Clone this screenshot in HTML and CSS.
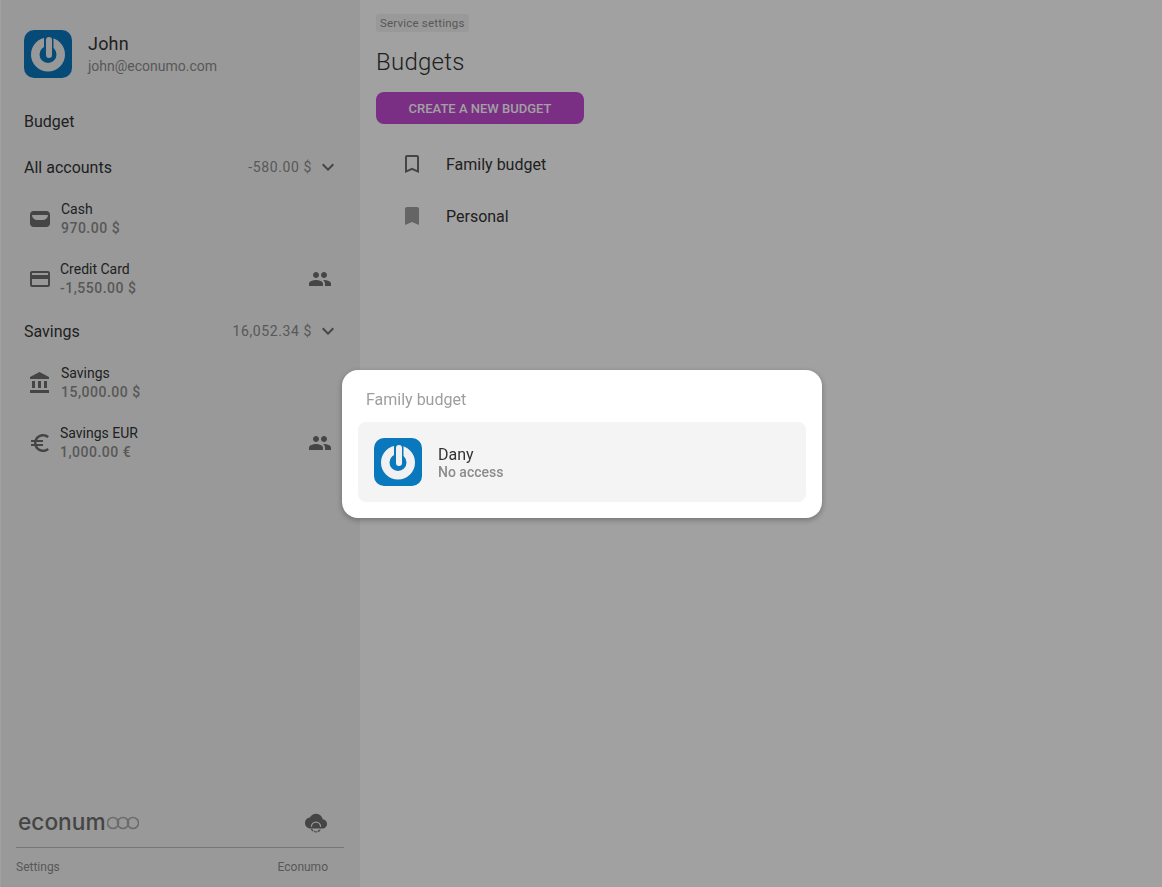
FILE: index.html
```html
<!DOCTYPE html>
<html lang="en">
<head>
  <meta charset="UTF-8" />
  <title>Budgets</title>
  <link rel="stylesheet" href="styles.css">
</head>
<body>
  <div class="layout">
    <aside class="sidebar">
      <div class="user">
        <svg class="avatar" viewBox="0 0 48 48">
          <rect width="48" height="48" rx="10" fill="#0a78bd" />
          <g class="avatar-mark">
            <circle cx="24" cy="24.500" r="12.750" fill="none" stroke="#f1f1f1" stroke-width="8.500" />
            <path d="M24.750 5v16" stroke="#0a78bd" stroke-width="9.500" />
            <path d="M25 10v15" stroke="#f1f1f1" stroke-width="6" stroke-linecap="round" />
          </g>
        </svg>
        <div class="user-text">
          <div class="user-name">John</div>
          <div class="user-mail">john@econumo.com</div>
        </div>
      </div>

      <div class="nav-link">Budget</div>

      <div class="group">
        <span>All accounts</span>
        <span class="group-sum">-580.00 $</span>
        <svg class="chevron" viewBox="0 0 24 24"><path d="M16.59 8.59L12 13.17 7.41 8.59 6 10l6 6 6-6z" /></svg>
      </div>
      <div class="account">
        <svg class="account-icon" viewBox="0 0 24 24"><path fill-rule="evenodd" d="M5.500 4h13c1.900 0 3.500 1.600 3.500 3.500v9c0 1.900-1.600 3.500-3.500 3.500h-13C3.600 20 2 18.400 2 16.500v-9C2 5.600 3.600 4 5.500 4zm-1 4c-.4 0-.6.300-.5.700.6 2.600 2.600 4.300 5 4.300h6c2.400 0 4.400-1.700 5-4.300.1-.4-.1-.7-.5-.7z" /></svg>
        <div class="account-text wide">
          <div class="account-name">Cash</div>
          <div class="account-sum">970.00 $</div>
        </div>
      </div>
      <div class="account">
        <svg class="account-icon" viewBox="0 0 24 24"><path d="M20 4H4c-1.110 0-1.990.89-1.990 2L2 18c0 1.110.89 2 2 2h16c1.110 0 2-.89 2-2V6c0-1.110-.89-2-2-2zm0 14H4v-6h16v6zm0-10H4V6h16v2z" /></svg>
        <div class="account-text">
          <div class="account-name">Credit Card</div>
          <div class="account-sum">-1,550.00 $</div>
        </div>
        <svg class="shared" viewBox="0 0 24 24"><path d="M16 11c1.660 0 2.990-1.340 2.990-3S17.660 5 16 5c-1.660 0-3 1.340-3 3s1.340 3 3 3zm-8 0c1.660 0 2.990-1.340 2.990-3S9.660 5 8 5C6.340 5 5 6.340 5 8s1.340 3 3 3zm0 2c-2.330 0-7 1.170-7 3.500V19h14v-2.500c0-2.330-4.670-3.500-7-3.500zm8 0c-.29 0-.62.02-.97.05 1.160.84 1.970 1.970 1.970 3.450V19h6v-2.500c0-2.330-4.670-3.500-7-3.500z" /></svg>
      </div>

      <div class="group">
        <span>Savings</span>
        <span class="group-sum">16,052.34 $</span>
        <svg class="chevron" viewBox="0 0 24 24"><path d="M16.59 8.59L12 13.17 7.41 8.59 6 10l6 6 6-6z" /></svg>
      </div>
      <div class="account">
        <svg class="account-icon" viewBox="0 0 24 24"><path d="M4 10v7h3v-7H4zm6 0v7h3v-7h-3zM2 22h19v-3H2v3zm14-12v7h3v-7h-3zm-4.500-9L2 6v2h19V6l-9.500-5z" /></svg>
        <div class="account-text wide">
          <div class="account-name">Savings</div>
          <div class="account-sum">15,000.00 $</div>
        </div>
      </div>
      <div class="account">
        <svg class="account-icon" viewBox="0 0 24 24"><path d="M15 18.500c-2.510 0-4.680-1.420-5.760-3.500H15v-2H8.580c-.05-.33-.08-.66-.08-1s.03-.67.08-1H15V9H9.240C10.320 6.920 12.500 5.500 15 5.500c1.610 0 3.090.59 4.230 1.570L21 5.300C19.410 3.870 17.300 3 15 3c-3.920 0-7.240 2.510-8.480 6H3v2h3.060c-.04.33-.06.66-.06 1s.02.67.06 1H3v2h3.520c1.240 3.490 4.560 6 8.480 6 2.310 0 4.410-.87 6-2.300l-1.780-1.770c-1.130.98-2.600 1.570-4.220 1.570z" /></svg>
        <div class="account-text">
          <div class="account-name">Savings EUR</div>
          <div class="account-sum">1,000.00 €</div>
        </div>
        <svg class="shared" viewBox="0 0 24 24"><path d="M16 11c1.660 0 2.990-1.340 2.990-3S17.660 5 16 5c-1.660 0-3 1.340-3 3s1.340 3 3 3zm-8 0c1.660 0 2.990-1.340 2.990-3S9.660 5 8 5C6.340 5 5 6.340 5 8s1.340 3 3 3zm0 2c-2.330 0-7 1.170-7 3.500V19h14v-2.500c0-2.330-4.670-3.500-7-3.500zm8 0c-.29 0-.62.02-.97.05 1.160.84 1.970 1.970 1.970 3.450V19h6v-2.500c0-2.330-4.670-3.500-7-3.500z" /></svg>
      </div>

      <div class="brand">
        <div class="logo">
          <span class="logo-text">econum</span>
          <svg class="logo-rings" viewBox="0 0 32 14">
            <circle cx="6" cy="7" r="5.500" />
            <circle cx="16" cy="7" r="5.500" />
            <circle cx="26" cy="7" r="5.500" />
          </svg>
        </div>
        <svg class="cloud" viewBox="0 0 24 24">
          <path d="M19.350 8.040C18.670 4.590 15.640 2 12 2 9.110 2 6.600 3.640 5.350 6.040 2.340 6.360 0 8.910 0 12c0 3.310 2.690 6 6 6h13c2.760 0 5-2.240 5-5 0-2.640-2.050-4.780-4.650-4.960z" />
          <path d="M7 16a5 5 0 0 1 10 0" fill="none" stroke="#f3f3f3" stroke-width="1.400" />
          <path d="M7 18.500a5.500 5.500 0 0 0 10 0" fill="none" stroke="#6e6e6e" stroke-width="1.400" stroke-dasharray="3 1" />
        </svg>
      </div>
      <div class="footer">
        <span>Settings</span>
        <span class="footer-right">Econumo</span>
      </div>
    </aside>

    <main class="content">
      <div class="crumb">Service settings</div>
      <h1 class="title">Budgets</h1>
      <button class="create-btn">CREATE A NEW BUDGET</button>
      <div class="budget-row">
        <svg class="budget-icon" viewBox="0 0 24 24"><path d="M17 3H7c-1.100 0-1.990.9-1.990 2L5 21l7-3 7 3V5c0-1.100-.9-2-2-2zm0 15l-5-2.180L7 18V5h10v13z" /></svg>
        <span>Family budget</span>
      </div>
      <div class="budget-row">
        <svg class="budget-icon filled" viewBox="0 0 24 24"><path d="M17 3H7c-1.100 0-1.990.9-1.990 2L5 21l7-3 7 3V5c0-1.100-.9-2-2-2z" /></svg>
        <span>Personal</span>
      </div>
    </main>
  </div>

  <div class="backdrop">
    <div class="dialog">
      <div class="dialog-title">Family budget</div>
      <div class="member">
        <svg class="avatar" viewBox="0 0 48 48">
          <rect width="48" height="48" rx="10" fill="#0a78bd" />
          <g class="avatar-mark">
            <circle cx="24" cy="24.500" r="12.750" fill="none" stroke="#f1f1f1" stroke-width="8.500" />
            <path d="M24.750 5v16" stroke="#0a78bd" stroke-width="9.500" />
            <path d="M25 10v15" stroke="#f1f1f1" stroke-width="6" stroke-linecap="round" />
          </g>
        </svg>
        <div class="member-text">
          <div class="member-name">Dany</div>
          <div class="member-access">No access</div>
        </div>
      </div>
    </div>
  </div>
</body>
</html>
```

FILE: styles.css
```css
* {
  box-sizing: border-box;
}
body {
  margin: 0;
  height: 887px;
  overflow: hidden;
  background: #fff;
  color: #333;
  font-family: Roboto, sans-serif;
  font-size: 16px;
}
.layout {
  display: flex;
  height: 100%;
}

/* Sidebar */
.sidebar {
  width: 359px;
  margin-left: 1px;
  padding: 30px 16px 0 15px;
  background: #f3f3f3;
  display: flex;
  flex-direction: column;
}
.user {
  display: flex;
  align-items: center;
  gap: 16px;
  padding-left: 8px;
  height: 48px;
}
.avatar {
  width: 48px;
  height: 48px;
  flex: none;
}
.avatar-mark {
  filter: blur(0.5px);
}
.user-name {
  font-size: 18px;
  line-height: 24px;
  letter-spacing: 0.2px;
}
.user-mail {
  font-size: 14px;
  line-height: 20px;
  color: #8c8c8c;
}
.nav-link {
  margin-top: 32px;
  padding-left: 8px;
  line-height: 24px;
}
.group {
  display: flex;
  align-items: center;
  height: 24px;
  margin-top: 21px;
  padding-left: 8px;
  padding-right: 4px;
}
.account + .group {
  margin-top: 11px;
}
.group-sum {
  margin-left: auto;
  margin-right: 4px;
  font-size: 14px;
  letter-spacing: 0.6px;
  color: #8c8c8c;
}
.chevron {
  width: 24px;
  height: 24px;
  fill: #6e6e6e;
}
.account {
  display: flex;
  align-items: center;
  height: 60px;
  padding: 0 12px;
}
.group + .account {
  margin-top: 9px;
}
.account-icon {
  width: 24px;
  height: 24px;
  margin-top: 2px;
  flex: none;
  fill: #6e6e6e;
}
.account-text {
  margin-left: 8px;
  padding-top: 1px;
  flex: 1;
}
.account-text.wide {
  margin-left: 9px;
}
.account-name {
  font-size: 14px;
  line-height: 18px;
}
.account-sum {
  margin-top: 1px;
  font-size: 14px;
  line-height: 18px;
  font-weight: 500;
  letter-spacing: 0.5px;
  color: #8c8c8c;
}
.shared {
  width: 24px;
  height: 24px;
  margin-top: 2px;
  flex: none;
  fill: #6e6e6e;
}
.brand {
  margin-top: auto;
  display: flex;
  align-items: center;
  justify-content: space-between;
  height: 32px;
  padding: 0 17px 0 2px;
}
.logo {
  display: flex;
  align-items: center;
  gap: 1px;
}
.logo-text {
  font-family: Inter, sans-serif;
  font-size: 22.700px;
  line-height: 24px;
  font-weight: 500;
  color: #6e6e6e;
  position: relative;
  top: -1px;
}
.logo-rings {
  width: 32px;
  height: 14px;
  fill: none;
  stroke: #aaa;
  stroke-width: 1.600;
}
.cloud {
  width: 22px;
  height: 22px;
  fill: #6e6e6e;
}
.footer {
  display: flex;
  justify-content: space-between;
  margin-top: 8px;
  height: 40px;
  padding: 11px 16px 0 0;
  border-top: 1px solid #bdbdbd;
  font-size: 12px;
  line-height: 16px;
  color: #8c8c8c;
}

/* Main */
.content {
  flex: 1;
  padding: 12px 16px;
}
.crumb {
  display: inline-block;
  padding: 0 4px;
  height: 18px;
  line-height: 18px;
  font-size: 11.500px;
  letter-spacing: 0.2px;
  color: #8c8c8c;
  background: #f3f3f3;
  border-radius: 3px;
}
.title {
  margin: 14px 0 0;
  font-size: 24px;
  line-height: 32px;
  font-weight: 300;
  letter-spacing: 0.25px;
}
.create-btn {
  display: block;
  width: 208px;
  height: 32px;
  margin-top: 14px;
  padding: 0;
  border: none;
  border-radius: 8px;
  background: #c149d2;
  color: #fff;
  font-family: Roboto, sans-serif;
  font-size: 13px;
  font-weight: 500;
}
.budget-row {
  display: flex;
  align-items: center;
  gap: 22px;
  height: 52px;
  padding-left: 24px;
}
.create-btn + .budget-row {
  margin-top: 14px;
}
.budget-icon {
  width: 24px;
  height: 24px;
  flex: none;
  fill: #6e6e6e;
}
.budget-icon.filled {
  fill: #a0a0a0;
}

/* Dialog */
.backdrop {
  position: fixed;
  inset: 0;
  background: rgba(0, 0, 0, 0.37);
  display: flex;
  justify-content: center;
  align-items: center;
  padding: 1px 0 0 2px;
}
.dialog {
  width: 480px;
  height: 148px;
  padding: 18px 16px 16px;
  background: #fff;
  border-radius: 16px;
  box-shadow: 0 2px 6px rgba(0, 0, 0, 0.3);
}
.dialog-title {
  padding-left: 8px;
  line-height: 24px;
  color: #9e9e9e;
  margin-bottom: 10px;
}
.member {
  display: flex;
  align-items: center;
  gap: 16px;
  height: 80px;
  padding: 0 16px;
  background: #f4f4f4;
  border-radius: 8px;
}
.member-name {
  line-height: 20px;
}
.member-access {
  font-size: 14px;
  line-height: 14px;
  font-weight: 500;
  color: #8c8c8c;
}
```
